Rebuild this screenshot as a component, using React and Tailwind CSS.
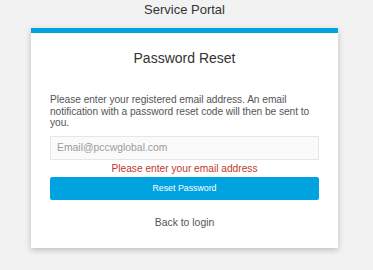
import React, { useState } from 'react'

function App() {
    const [email, setEmail] = useState('')

    return (
        <div className="min-h-[270px] w-full bg-[#f2f2f2] pt-[2px] font-['Liberation_Sans',Arial,sans-serif]">
            <div className="ml-[31px] w-[307px]">
                <h1 className="text-center text-[13px] leading-[15px] text-[#333]">Service Portal</h1>

                <div className="mt-[11px] border-t-[5px] border-[#00a3e0] bg-white px-[19px] pt-[17px] pb-[19px] shadow-[0_2px_6px_rgba(0,0,0,0.22)]">
                    <h2 className="text-center text-[14px] leading-[16px] text-[#333]">Password Reset</h2>

                    <p className="mt-[28px] -mr-[12px] whitespace-nowrap text-[10.2px] leading-[11.6px] tracking-[-0.05px] text-[#555]">
                        Please enter your registered email address. An email<br />
                        notification with a password reset code will then be sent to<br />
                        you.
                    </p>

                    <input
                        type="email"
                        value={email}
                        onChange={(e) => setEmail(e.target.value)}
                        placeholder="Email@pccwglobal.com"
                        className="mt-[7px] block h-[24px] w-full border border-[#e6e6e6] bg-[#fafafa] px-[6px] text-[10.4px] text-[#555] outline-none placeholder:text-[#9a9a9a]"
                    />

                    <p className="mt-[3px] text-center text-[10.2px] leading-[12px] text-[#c0392b]">Please enter your email address</p>

                    <button className="mt-[2px] block h-[23px] w-full rounded-[2px] bg-[#00a3e0] text-[8.8px] text-white">
                        Reset Password
                    </button>

                    <p className="mt-[17px] text-center text-[10.4px] leading-[12px] text-[#555]">Back to login</p>
                </div>
            </div>
        </div>
    )
}

export default App
